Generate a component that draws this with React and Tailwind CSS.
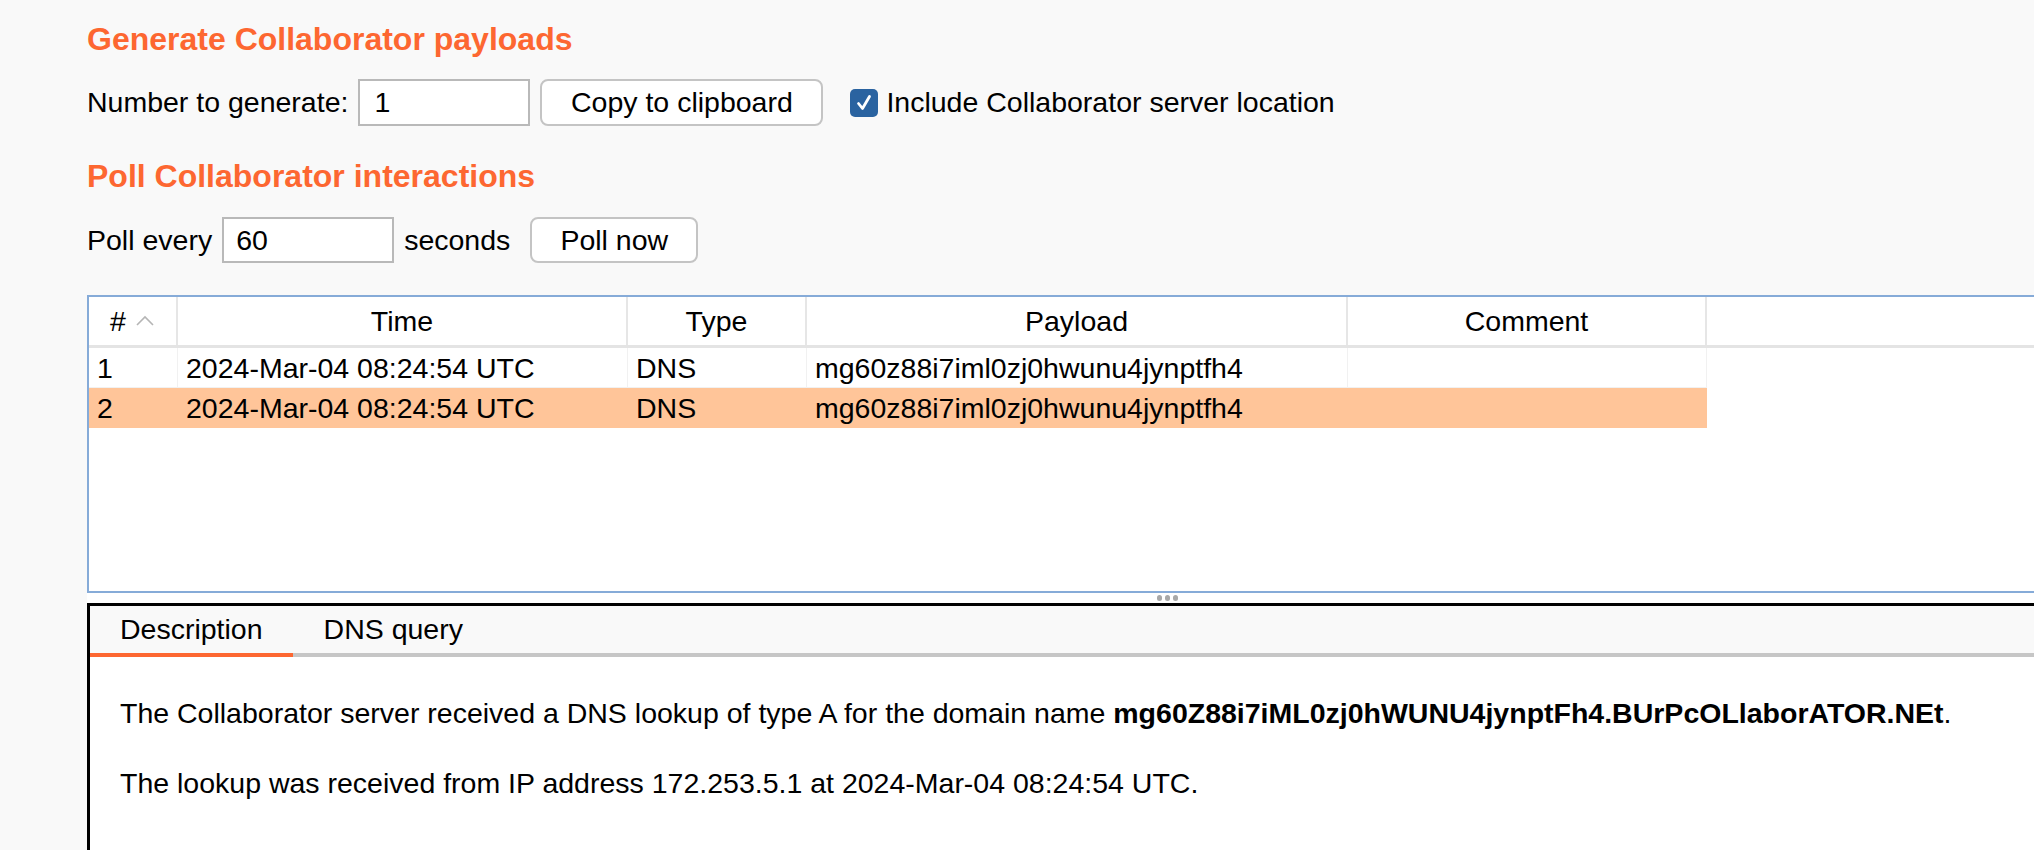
const rows = [
  { id: 1, time: '2024-Mar-04 08:24:54 UTC', type: 'DNS', payload: 'mg60z88i7iml0zj0hwunu4jynptfh4', comment: '' },
  { id: 2, time: '2024-Mar-04 08:24:54 UTC', type: 'DNS', payload: 'mg60z88i7iml0zj0hwunu4jynptfh4', comment: '', selected: true },
]

function HeaderCell({ children, last }) {
  return (
    <div
      className={`flex items-center justify-center ${last ? '' : 'border-r-2 border-[#e6e6e6]'}`}
    >
      {children}
    </div>
  )
}

export default function App() {
  return (
    <div className="h-[850px] w-[2034px] overflow-hidden bg-[#f9f9f9] font-['Liberation_Sans',Arial,sans-serif] text-[28.5px] text-black">
      <div className="pl-[87px] pt-[19px]">
        <h1 className="h-[40px] text-[32px] font-bold leading-[40px] text-[#fd6731]">
          Generate Collaborator payloads
        </h1>

        <div className="mt-[20px] flex h-[47px] items-center">
          <span>Number to generate:</span>
          <div className="ml-[10px] h-[47px] w-[172px] border-2 border-[#b9b9b9] bg-white pl-[14px] leading-[43px]">
            1
          </div>
          <button className="ml-[10px] h-[47px] w-[283px] rounded-[8px] border-2 border-[#c4c4c4] bg-white leading-[43px]">
            Copy to clipboard
          </button>
          <span className="ml-[27px] flex h-[28px] w-[28px] items-center justify-center rounded-[5px] bg-[#2a63a0]">
            <svg width="20" height="20" viewBox="0 0 20 20" fill="none">
              <path d="M4.5 10.5 L8.5 15.5 L15.5 3.5" stroke="white" strokeWidth="2.8" strokeLinecap="round" strokeLinejoin="round" />
            </svg>
          </span>
          <span className="ml-[8px]">Include Collaborator server location</span>
        </div>

        <h2 className="mt-[30px] h-[40px] text-[32px] font-bold leading-[40px] text-[#fd6731]">
          Poll Collaborator interactions
        </h2>

        <div className="mt-[21px] flex h-[46px] items-center">
          <span>Poll every</span>
          <div className="ml-[10px] h-[46px] w-[172px] border-2 border-[#b9b9b9] bg-white pl-[12px] leading-[42px]">
            60
          </div>
          <span className="ml-[10px]">seconds</span>
          <button className="ml-[20px] h-[46px] w-[168px] rounded-[8px] border-2 border-[#c4c4c4] bg-white leading-[42px]">
            Poll now
          </button>
        </div>

        {/* interactions table */}
        <div className="mt-[32px] h-[298px] border-2 border-r-0 border-[#86abd8] bg-white">
          <div className="grid h-[51px] grid-cols-[89px_450px_179px_541px_359px_1fr] border-b-[3px] border-[#e4e4e4]">
            <HeaderCell>
              <span className="flex items-center gap-[9px]">
                #
                <svg width="20" height="12" viewBox="0 0 20 12" fill="none">
                  <path d="M2 10 L10 2 L18 10" stroke="#b5b5b5" strokeWidth="1.6" />
                </svg>
              </span>
            </HeaderCell>
            <HeaderCell>Time</HeaderCell>
            <HeaderCell>Type</HeaderCell>
            <HeaderCell>Payload</HeaderCell>
            <HeaderCell>Comment</HeaderCell>
            <HeaderCell last />
          </div>
          {rows.map((r) => (
            <div key={r.id} className="grid h-[40px] grid-cols-[89px_450px_179px_541px_359px_1fr] leading-[40px]">
              {[r.id, r.time, r.type, r.payload, r.comment].map((v, i) => (
                <div
                  key={i}
                  className={`truncate pl-[8px] ${
                    r.selected ? 'bg-[#ffc599]' : 'border-r border-b border-[#f1f1f1]'
                  }`}
                >
                  {v}
                </div>
              ))}
              <div />
            </div>
          ))}
        </div>

        {/* splitter */}
        <div className="flex h-[10px] items-center bg-white pl-[1070px]">
          <div className="flex gap-[3px]">
            <span className="h-[6px] w-[5px] rounded-full bg-[#a8a8a8]" />
            <span className="h-[6px] w-[5px] rounded-full bg-[#a8a8a8]" />
            <span className="h-[6px] w-[5px] rounded-full bg-[#a8a8a8]" />
          </div>
        </div>

        {/* details panel */}
        <div className="h-[300px] border-t-[3px] border-l-[3px] border-black bg-white">
          <div className="flex h-[51px] border-b-4 border-[#c6c6c6] bg-[#f9f9f9]">
            <div className="-mb-[4px] flex h-[51px] items-center border-b-4 border-[#fd6731] px-[30px]">
              Description
            </div>
            <div className="flex h-[47px] items-center pl-[31px]">DNS query</div>
          </div>
          <div className="pl-[30px] pt-[39px] leading-[34px]">
            <p>
              The Collaborator server received a DNS lookup of type A for the domain name{' '}
              <b className="font-bold">mg60Z88i7iML0zj0hWUNU4jynptFh4.BUrPcOLlaborATOR.NEt</b>.
            </p>
            <p className="mt-[36px]">
              The lookup was received from IP address 172.253.5.1 at 2024-Mar-04 08:24:54 UTC.
            </p>
          </div>
        </div>
      </div>
    </div>
  )
}
